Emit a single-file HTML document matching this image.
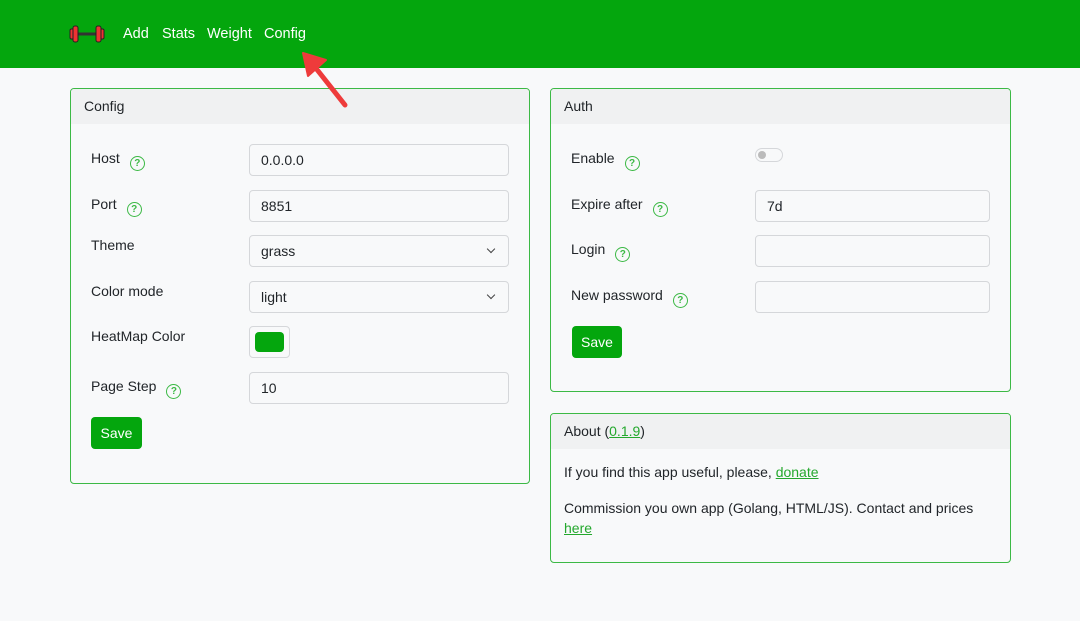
<!DOCTYPE html><html><head><style>
body{margin:0;width:1080px;height:621px;background:#f8f9fa;font-family:"Liberation Sans",sans-serif;font-size:14px;color:#212529;position:relative;overflow:hidden}
.a{position:absolute}
.nav{left:0;top:0;width:1080px;height:68px;background:#04a60d}
.nav span{position:absolute;top:26px;color:#fff;font-size:14.5px}
.card{position:absolute;border:1px solid #3cb945;border-radius:4px;background:#f8f9fa;overflow:hidden}
.hd{height:35px;background:#f0f1f2;padding-left:13px;line-height:35px;box-sizing:border-box}
.lb{position:absolute;font-size:14px}
.q{display:inline-block;width:13px;height:13px;border:1.5px solid #3cb945;border-radius:50%;color:#3cb945;font-size:10px;line-height:13px;text-align:center;font-weight:bold;margin-left:10px;vertical-align:-3px}
.in{position:absolute;height:30px;border:1px solid #d5d7da;border-radius:4px;background:#f8f9fa;box-sizing:content-box;line-height:30px;padding-left:11px;font-size:14px}
.sel::after{content:"";position:absolute;right:14px;top:10px;width:5px;height:5px;border-right:1.5px solid #444;border-bottom:1.5px solid #444;transform:rotate(45deg)}
.btn{position:absolute;background:#04a60d;color:#fff;border-radius:4px;text-align:center;line-height:32px;height:32px;font-size:14px}
a{color:#24a82d;text-decoration:underline}
</style></head><body>
<div class="a nav">
<svg class="a" style="left:69px;top:25px" width="36" height="18" viewBox="0 0 36 18"><rect x="6" y="7.5" width="24" height="3" fill="#333"/><rect x="1" y="4" width="4" height="10" rx="1.5" fill="#e33" stroke="#222"/><rect x="4" y="1" width="5" height="16" rx="2" fill="#e33" stroke="#222"/><rect x="31" y="4" width="4" height="10" rx="1.5" fill="#e33" stroke="#222"/><rect x="27" y="1" width="5" height="16" rx="2" fill="#e33" stroke="#222"/></svg>
<span style="left:123px">Add</span><span style="left:162px">Stats</span><span style="left:207px">Weight</span><span style="left:264px">Config</span>
</div>
<div class="card" style="left:70px;top:88px;width:458px;height:394px"><div class="hd">Config</div></div>
<div class="lb" style="left:91px;top:150px">Host<span class="q">?</span></div>
<div class="in" style="left:249px;top:144px;width:247px">0.0.0.0</div>
<div class="lb" style="left:91px;top:196px">Port<span class="q">?</span></div>
<div class="in" style="left:249px;top:190px;width:247px">8851</div>
<div class="lb" style="left:91px;top:237px">Theme</div>
<div class="in sel" style="left:249px;top:235px;width:247px">grass</div>
<div class="lb" style="left:91px;top:283px">Color mode</div>
<div class="in sel" style="left:249px;top:281px;width:247px">light</div>
<div class="lb" style="left:91px;top:328px">HeatMap Color</div>
<div class="in" style="left:249px;top:326px;width:29px;padding-left:10px"><div class="a" style="left:5px;top:5px;width:29px;height:20px;background:#04a60d;border-radius:4px"></div></div>
<div class="lb" style="left:91px;top:378px">Page Step<span class="q">?</span></div>
<div class="in" style="left:249px;top:372px;width:247px">10</div>
<div class="btn" style="left:91px;top:417px;width:51px">Save</div>

<div class="card" style="left:550px;top:88px;width:459px;height:302px"><div class="hd">Auth</div></div>
<div class="lb" style="left:571px;top:150px">Enable<span class="q">?</span></div>
<div class="a" style="left:755px;top:148px;width:26px;height:12px;border:1px solid #d5d7da;border-radius:7px"><div class="a" style="left:2px;top:2px;width:8px;height:8px;border-radius:50%;background:#bbb"></div></div>
<div class="lb" style="left:571px;top:196px">Expire after<span class="q">?</span></div>
<div class="in" style="left:755px;top:190px;width:222px">7d</div>
<div class="lb" style="left:571px;top:241px">Login<span class="q">?</span></div>
<div class="in" style="left:755px;top:235px;width:222px"></div>
<div class="lb" style="left:571px;top:287px">New password<span class="q">?</span></div>
<div class="in" style="left:755px;top:281px;width:222px"></div>
<div class="btn" style="left:572px;top:326px;width:50px">Save</div>

<div class="card" style="left:550px;top:413px;width:459px;height:148px"><div class="hd">About (<a>0.1.9</a>)</div>
<div class="a" style="left:13px;top:50px">If you find this app useful, please, <a>donate</a></div>
<div class="a" style="left:13px;top:84px;line-height:20px">Commission you own app (Golang, HTML/JS). Contact and prices<br><a>here</a></div></div>

<svg class="a" style="left:295px;top:45px" width="60" height="70" viewBox="0 0 60 70"><line x1="50" y1="60" x2="16" y2="17" stroke="#ee3b3b" stroke-width="5" stroke-linecap="round"/><polygon points="8,8 31,15 13,31" fill="#ee3b3b" stroke="#ee3b3b" stroke-width="2" stroke-linejoin="round"/></svg>
</body></html>
